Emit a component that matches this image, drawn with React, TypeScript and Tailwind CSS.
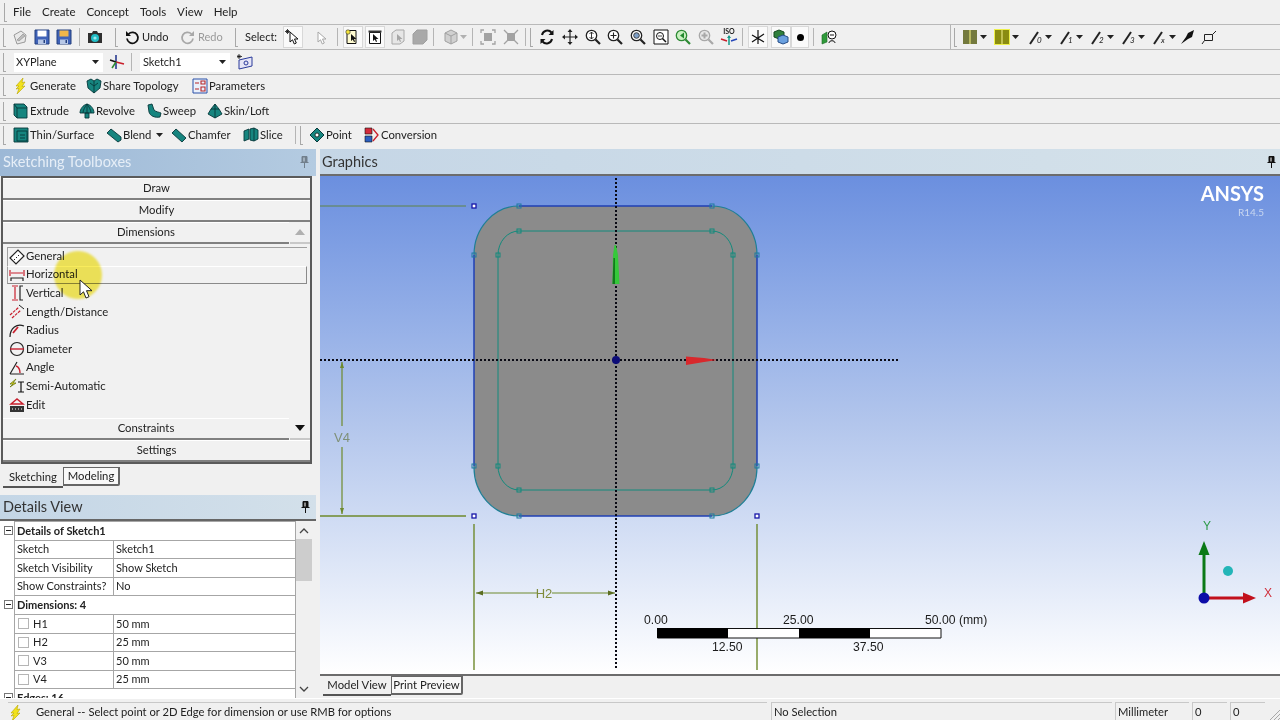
import type { ReactNode } from 'react';

type SlotProps = { className?: string; children?: ReactNode };

const Ico = ({ children, size = 16 }: { children: ReactNode; size?: number }) => (
  <svg width={size} height={size} viewBox="0 0 16 16" className="shrink-0">
    {children}
  </svg>
);

const Slot = ({ className = '', children }: SlotProps) => (
  <div className={`flex shrink-0 items-center justify-center ${className}`}>{children}</div>
);

const Grip = ({ className = '' }: { className?: string }) => (
  <div className={`h-[19px] w-[3px] shrink-0 border-l border-b border-[#a8a8a8] ${className}`} />
);
const Sep = ({ className = '' }: { className?: string }) => (
  <div className={`h-[18px] w-px shrink-0 bg-[#b5b5b5] ${className}`} />
);
const Caret = ({ className = '' }: { className?: string }) => (
  <svg width="7" height="4" viewBox="0 0 7 4" className={`shrink-0 ${className}`}>
    <path d="M0 0h7L3.500 4z" fill="#222" />
  </svg>
);

const Bolt = () => (
  <Ico>
    <path d="M10 0 3 8h3l-3 3 3-.5L4 16l8-8-3 .5L12 4 9 4.500z" fill="#f2e21b" stroke="#b8a400" strokeWidth=".6" />
  </Ico>
);
const Floppy = ({ label = '#fff' }: { label?: string }) => (
  <Ico>
    <path d="M1 1h14v14H1z" fill="#3f62b8" stroke="#24407f" />
    <path d="M3.500 1.500h9v6h-9z" fill={label} />
    <path d="M4 10.500h8V15H4z" fill="#b8c8e6" />
    <path d="M9.500 11h1.500v3H9.500z" fill="#24407f" />
  </Ico>
);
const Sheet = () => (
  <Ico>
    <path d="M2 6 9 2l5 4-1 7-8 2z" fill="#e9e9e9" stroke="#9a9a9a" />
    <path d="m5 11 6-6 2 2-6 5z" fill="#bcbcbc" stroke="#8a8a8a" strokeWidth=".6" />
  </Ico>
);
const Camera = () => (
  <Ico>
    <path d="M1 4h4l1-2h4l1 2h4v10H1z" fill="#303030" />
    <circle cx="8" cy="9" r="4" fill="#22bdc6" />
    <circle cx="8" cy="9" r="1.600" fill="#9fe8ec" />
  </Ico>
);
const Arrow = ({ color = '#111', fill = '#fff' }: { color?: string; fill?: string }) => (
  <path d="M5 3v10l2.500-2.200L9.300 15l2-1-1.800-4H13z" fill={fill} stroke={color} strokeWidth="1" strokeLinejoin="round" />
);
const UndoIcon = ({ color = '#111', flip = false }: { color?: string; flip?: boolean }) => (
  <Ico>
    <g transform={flip ? 'matrix(-1 0 0 1 16 0)' : undefined}>
      <path d="M4.500 5A5.500 5.500 0 1 1 3 9.500" fill="none" stroke={color} strokeWidth="1.800" />
      <path d="M2 2v5h5z" fill={color} />
    </g>
  </Ico>
);
const SelectPoint = () => (
  <Ico>
    <path d="M2 1.500h9v13H2z" fill="#fffbd0" stroke="#111" />
    <circle cx="3" cy="3" r="2.200" fill="#f5e53a" stroke="#333" strokeWidth=".6" />
    <path d="M6 5v7l1.800-1.500L9 13l1-.5-1-2.500h2.500z" fill="#111" />
  </Ico>
);
const SelectEdge = () => (
  <Ico>
    <path d="M2.500 3.500h11v11h-11z" fill="#fff" stroke="#111" />
    <path d="M1.500 1.500h13v2h-13z" fill="#333" />
    <path d="M6 5v7l1.800-1.500L9 13l1-.5-1-2.500h2.500z" fill="#111" />
  </Ico>
);
const SelectFace = () => (
  <Ico>
    <path d="M2 4 6 1h8v11l-4 3H2z" fill="#e6e6e6" stroke="#a8a8a8" />
    <path d="M7 5v7l1.800-1.500L10 13l1-.5-1-2.500h2.500z" fill="#a5a5a5" />
  </Ico>
);
const SelectBody = () => (
  <Ico>
    <path d="M1 5l4-4h10v10l-4 4H1z" fill="#a9a9a9" stroke="#a0a0a0" strokeLinejoin="round" />
  </Ico>
);
const CubeGray = () => (
  <Ico>
    <path d="m8 1 6 3v8l-6 3-6-3V4z" fill="#d0d0d0" stroke="#a0a0a0" />
    <path d="M2 4l6 3 6-3M8 7v8" fill="none" stroke="#a0a0a0" />
  </Ico>
);
const Fit = ({ star = false }: { star?: boolean }) => (
  <Ico>
    <path d="M4 4h8v8H4z" fill="#a2a2a2" />
    {star ? (
      <path d="M1 1l4 4M15 1l-4 4M1 15l4-4M15 15l-4-4" stroke="#a2a2a2" strokeWidth="1.300" />
    ) : (
      <path d="M1 4V1h3M12 1h3v3M15 12v3h-3M4 15H1v-3" fill="none" stroke="#a2a2a2" strokeWidth="1.300" />
    )}
  </Ico>
);
const Rotate = () => (
  <Ico>
    <path d="M3 6a5.500 5.500 0 0 1 9.500-2.500M13 10a5.500 5.500 0 0 1-9.500 2.500" fill="none" stroke="#111" strokeWidth="2" />
    <path d="M14.500 1v5h-5zM1.500 15v-5h5z" fill="#111" />
  </Ico>
);
const Pan = () => (
  <Ico>
    <path d="M8 1v14M1 8h14" stroke="#222" strokeWidth="1.200" />
    <path d="M8 0l2.500 3h-5zM8 16l2.500-3h-5zM0 8l3-2.500v5zM16 8l-3-2.500v5z" fill="#222" />
  </Ico>
);
const Mag = ({ children, ring = '#222', fill = '#fff' }: { children?: ReactNode; ring?: string; fill?: string }) => (
  <Ico>
    <circle cx="6.500" cy="6.500" r="5.200" fill={fill} stroke={ring} strokeWidth="1.300" />
    <path d="m10.500 10.500 4.500 4.500" stroke={ring} strokeWidth="2.200" />
    {children}
  </Ico>
);
const Iso = () => (
  <svg width="20" height="20" viewBox="0 0 20 20" className="shrink-0">
    <text x="10" y="7" textAnchor="middle" fontSize="7" fontWeight="700" fill="#222">ISO</text>
    <path d="M10 9v9" stroke="#139a8a" strokeWidth="1.500" />
    <path d="M8 11l2-3 2 3z" fill="#139a8a" />
    <path d="M2 12l6 2" stroke="#c81e2a" strokeWidth="1.500" />
    <path d="M18 12l-6 2" stroke="#2547b8" strokeWidth="1.500" />
  </svg>
);
const Axes = () => (
  <Ico>
    <path d="M8 1v14M2 13 14 5M2 6l12 7" stroke="#111" strokeWidth="1.200" />
  </Ico>
);
const Cube3d = () => (
  <Ico>
    <path d="m6 1 5 2v5l-5 2-5-2V3z" fill="#2f7f3c" stroke="#174a20" />
    <path d="m10 6 5 2v5l-5 2-5-2V8z" fill="#6aa0df" stroke="#254c86" />
  </Ico>
);
const Look = () => (
  <Ico>
    <path d="M1 6l5-3v10l-5 2z" fill="#2f9a3a" stroke="#1c6a26" strokeWidth=".6" />
    <circle cx="11" cy="6" r="4" fill="#fff" stroke="#111" />
    <path d="M8 14c0-3 6-3 6 0" fill="none" stroke="#111" />
    <path d="M9 6h4" stroke="#111" />
  </Ico>
);
const Bars = ({ bg, edge }: { bg: string; edge?: string }) => (
  <svg width="14" height="14" viewBox="0 0 14 14" className="shrink-0" style={edge ? { outline: `1px solid ${edge}` } : undefined}>
    <path d="M0 0h14v14H0z" fill={bg} />
    <path d="M7 0v14" stroke="#e6e47a" strokeWidth="1.200" />
  </svg>
);
const Selector = ({ n }: { n: string }) => (
  <Ico>
    <path d="M1 15 9 3" stroke="#222" strokeWidth="2" />
    <text x="8" y="14" fontSize="8" fontStyle="italic" fill="#222">{n}</text>
  </Ico>
);

const Teal = ({ d, inner }: { d: string; inner?: string }) => (
  <Ico>
    <path d={d} fill="#16857f" stroke="#07383a" strokeWidth=".9" strokeLinejoin="round" />
    {inner && <path d={inner} fill="none" stroke="#07383a" strokeWidth=".9" />}
  </Ico>
);

const Sel = ({ value, className = '' }: { value: string; className?: string }) => (
  <div className={`flex h-[19px] shrink-0 items-center justify-between bg-white pl-[2px] pr-[4px] text-[11px] ${className}`}>
    <span>{value}</span>
    <Caret />
  </div>
);

const Tool = ({ icon, label, className = '' }: { icon: ReactNode; label: string; className?: string }) => (
  <div className={`flex shrink-0 items-center gap-[1px] ${className}`}>
    {icon}
    <span className="whitespace-nowrap">{label}</span>
  </div>
);

function Toolbars() {
  return (
    <div className="shrink-0 text-[11.300px] text-[#222]">
      <div className="flex h-[25px] items-center border-b border-[#b9b9b9] pl-[4px]">
        <Grip />
        <div className="ml-[6px] flex gap-[11px] text-[11.500px]">
          <span>File</span>
          <span>Create</span>
          <span>Concept</span>
          <span>Tools</span>
          <span>View</span>
          <span>Help</span>
        </div>
      </div>

      <div className="flex h-[25px] items-center border-b border-[#b9b9b9] pl-[3px] text-[11px]">
        <Grip />
        <Slot className="ml-[3px] w-[22px]"><Sheet /></Slot>
        <Slot className="w-[22px]"><Floppy /></Slot>
        <Slot className="w-[22px]"><Floppy label="#f0b64a" /></Slot>
        <Sep className="ml-[4px]" />
        <Slot className="ml-[4px] w-[22px]"><Camera /></Slot>
        <Grip className="ml-[9px]" />
        <div className="ml-[6px]"><UndoIcon /></div>
        <span className="ml-[2px] w-[26px]">Undo</span>
        <div className="ml-[12px]"><UndoIcon color="#a8a8a8" flip /></div>
        <span className="ml-[2px] w-[26px] text-[#9a9a9a]">Redo</span>
        <Grip className="ml-[11px]" />
        <span className="ml-[7px] w-[32px] whitespace-nowrap">Select:</span>
        <Slot className="ml-[6px] h-[22px] w-[20px] border border-[#d8d8d8] bg-[#fafafa]"><Ico><Arrow /><path d="M1 1l3 3M4 1 1 4M2.500 0v5M0 2.500h5" stroke="#111" strokeWidth=".8" /></Ico></Slot>
        <Slot className="ml-[8px] w-[20px]"><Ico><Arrow color="#a8a8a8" /></Ico></Slot>
        <Sep className="ml-[6px]" />
        <Slot className="ml-[5px] h-[22px] w-[20px] border border-[#d8d8d8] bg-[#fafafa]"><SelectPoint /></Slot>
        <Slot className="ml-[2px] h-[22px] w-[20px] border border-[#d8d8d8] bg-[#fafafa]"><SelectEdge /></Slot>
        <Slot className="ml-[3px] w-[20px]"><SelectFace /></Slot>
        <Slot className="ml-[2px] w-[20px]"><SelectBody /></Slot>
        <Sep className="ml-[3px]" />
        <Slot className="ml-[8px] w-[26px] gap-[1px]"><CubeGray /><Caret className="opacity-30" /></Slot>
        <Sep className="ml-[4px]" />
        <Slot className="ml-[5px] w-[20px]"><Fit /></Slot>
        <Slot className="ml-[3px] w-[20px]"><Fit star /></Slot>
        <Sep className="ml-[4px]" />
        <Grip className="ml-[4px]" />
        <Slot className="ml-[3px] w-[22.700px]"><Rotate /></Slot>
        <Slot className="w-[22.700px]"><Pan /></Slot>
        <Slot className="w-[22.700px]">
          <Mag><path d="M6.500 3v7M4.500 5l2-2 2 2M4.500 8l2 2 2-2" fill="none" stroke="#222" strokeWidth=".9" /></Mag>
        </Slot>
        <Slot className="w-[22.700px]">
          <Mag><path d="M6.500 3.500v6M3.500 6.500h6" stroke="#222" strokeWidth="1.100" /></Mag>
        </Slot>
        <Slot className="w-[22.700px]">
          <Mag><circle cx="6.500" cy="6.500" r="2.800" fill="#7fa0c8" stroke="#333" strokeWidth=".9" /></Mag>
        </Slot>
        <Slot className="w-[22.700px]">
          <Ico>
            <path d="M1 1h14v14H1z" fill="#fff" stroke="#111" />
            <circle cx="7" cy="7" r="3.500" fill="none" stroke="#111" />
            <path d="m9.500 9.500 3.500 3.500" stroke="#111" strokeWidth="1.500" />
            <path d="M5 7h4" stroke="#111" strokeWidth=".8" />
          </Ico>
        </Slot>
        <Slot className="w-[22.700px]">
          <Mag ring="#2d8a34" fill="#c8f0c0"><path d="M9 3.500 5 6.500l4 3z" fill="#238a2e" /></Mag>
        </Slot>
        <Slot className="w-[22.700px]">
          <Mag ring="#a8a8a8" fill="#e8e8e8"><path d="M6.500 3.500v6M3.500 6.500h6" stroke="#a8a8a8" strokeWidth="2" /></Mag>
        </Slot>
        <Slot className="w-[22.700px]"><Iso /></Slot>
        <Sep className="ml-[2px]" />
        <Slot className="ml-[5px] h-[22px] w-[20px] border border-[#d8d8d8] bg-[#fafafa]"><Axes /></Slot>
        <Slot className="ml-[3px] h-[22px] w-[20px] border border-[#d8d8d8] bg-[#fafafa]"><Cube3d /></Slot>
        <Slot className="h-[22px] w-[18px] border border-[#d8d8d8] bg-[#fafafa]">
          <div className="h-[7px] w-[7px] rounded-full bg-black" />
        </Slot>
        <Sep className="ml-[4px]" />
        <Slot className="ml-[4px] w-[22px]"><Look /></Slot>
        <Sep className="ml-[110px] h-[24px]" />
        <Grip className="ml-[3px]" />
        <Slot className="ml-[6px] w-[26px] justify-start gap-[3px]"><Bars bg="#747a3e" /><Caret /></Slot>
        <Slot className="ml-[6px] w-[26px] justify-start gap-[3px]"><Bars bg="#8a8c10" edge="#eef04a" /><Caret /></Slot>
        {['0', '1', '2', '3', 'x'].map((n) => (
          <Slot key={n} className="ml-[7px] w-[24px] gap-0"><Selector n={n} /><Caret /></Slot>
        ))}
        <Slot className="ml-[3px] w-[18px]">
          <Ico><path d="M1 15 6 8l2-4 6-3-2 7-4 2z" fill="#111" /></Ico>
        </Slot>
        <Slot className="ml-[3px] w-[18px]">
          <Ico><path d="M3.500 5.500h8v6h-8zM3.500 11.500 1 15M11.500 5.500 15 2" fill="none" stroke="#222" /></Ico>
        </Slot>
      </div>

      <div className="flex h-[25px] items-center border-b border-[#b9b9b9] pl-[3px]">
        <Grip />
        <Sel value="XYPlane" className="ml-[8px] w-[89px]" />
        <Slot className="ml-[4px] w-[20px]">
          <Ico>
            <path d="M7 1v14" stroke="#1d2f8a" strokeWidth="1.500" />
            <path d="M1 6l6 2" stroke="#111" strokeWidth="1.500" />
            <path d="M7 8l8 2" stroke="#c81e2a" strokeWidth="1.800" />
            <path d="M7 8l-4 6" stroke="#2a8a30" strokeWidth="1.500" />
          </Ico>
        </Slot>
        <Sep className="ml-[4px]" />
        <Sel value="Sketch1" className="ml-[8px] w-[90px] pl-[3px]" />
        <Slot className="ml-[6px] w-[18px]">
          <Ico>
            <path d="M2 6l13-3v9L2 15z" fill="#e5e5f6" stroke="#2a3a9a" />
            <circle cx="9" cy="9" r="2" fill="none" stroke="#2a3a9a" />
            <path d="M2 0v5M0 2.500h5M.500 1l3 3M3.500 1l-3 3" stroke="#111" strokeWidth=".8" />
          </Ico>
        </Slot>
      </div>

      <div className="flex h-[24px] items-center border-b border-[#b9b9b9] pb-[1px] pl-[3px]">
        <Grip />
        <Tool icon={<Bolt />} label="Generate" className="ml-[7px] w-[61px]" />
        <Tool
          icon={<Teal d="M1 3l4-2 3 2 3-2 4 2-1 7-6 5-6-5z" inner="M8 3v12M4 5l4 3 4-3" />}
          label="Share Topology"
          className="ml-[12px] w-[95px]"
        />
        <Tool
          icon={
            <Ico>
              <path d="M1 1h14v14H1z" fill="#eaf0fb" stroke="#2a50a8" />
              <path d="M3 5h4M9 3h4v3H9zM3 11h4M9 9h4v4H9z" fill="none" stroke="#b5262a" strokeWidth="1.100" />
            </Ico>
          }
          label="Parameters"
          className="ml-[11px] w-[73px]"
        />
      </div>

      <div className="flex h-[25px] items-center border-b border-[#b9b9b9] pl-[3px]">
        <Grip />
        <Tool icon={<Teal d="M1 1h10l3 3v11H4l-3-3z" inner="M4 15V5h10M1 1l3 4" />} label="Extrude" className="ml-[7px] w-[54px]" />
        <Tool icon={<Teal d="M8 1c4 1 7 5 7 9H1c0-4 3-8 7-9zM6 10h4v5H6z" inner="M8 1v9M4 10c0-3 2-6 4-9M12 10c0-3-2-6-4-9" />} label="Revolve" className="ml-[12px] w-[55px]" />
        <Tool icon={<Teal d="M2 2l4-1 2 6c2 2 5 2 7 3l-1 4c-5 1-10-1-11-5z" />} label="Sweep" className="ml-[12px] w-[49px]" />
        <Tool icon={<Teal d="M8 1l4 5 3 5-7 4-7-4 3-5z" inner="M8 1v14M4 6h8" />} label="Skin/Loft" className="ml-[12px] w-[62px]" />
      </div>

      <div className="flex h-[25px] items-center pb-[3px] pl-[3px]">
        <Grip />
        <Tool icon={<Teal d="M1 1h14v14H1z" inner="M4 4h10v10H4zM7 8h5M7 11h5" />} label="Thin/Surface" className="ml-[7px] w-[81px]" />
        <Tool icon={<Teal d="M1 6l4-4 10 8v3l-3 2z" />} label="Blend" className="ml-[12px] w-[45px]" />
        <Caret className="ml-[5px]" />
        <Tool icon={<Teal d="M1 6l4-4 10 9-4 4z" />} label="Chamfer" className="ml-[8px] w-[61px]" />
        <Tool icon={<Teal d="M1 4l5-2v10l-5 2zM7 2l4-1 4 2v9l-4 2-4-1z" inner="M11 1v13" />} label="Slice" className="ml-[11px] w-[41px]" />
        <Sep className="ml-[11px]" />
        <Grip className="ml-[4px]" />
        <Tool
          icon={
            <Ico>
              <path d="M8 1l7 7-7 7-7-7z" fill="#16857f" stroke="#07383a" />
              <circle cx="8" cy="8" r="2" fill="#fff" stroke="#111" strokeWidth=".8" />
            </Ico>
          }
          label="Point"
          className="ml-[6px] w-[44px]"
        />
        <Tool
          icon={
            <Ico>
              <path d="M1 1h7v6H1z" fill="#d32a3a" stroke="#111" strokeWidth=".6" />
              <path d="M1 9h7v6H1z" fill="#2a5fc0" stroke="#111" strokeWidth=".6" />
              <path d="M9 2l5 6-5 6" fill="none" stroke="#c81e2a" strokeWidth="1.300" />
            </Ico>
          }
          label="Conversion"
          className="ml-[11px] w-[74px]"
        />
      </div>
    </div>
  );
}

const PinIcon = () => (
  <svg width="9" height="12" viewBox="0 0 9 12" className="shrink-0">
    <path d="M2 .5h5v6H2zM.5 6.500h8M4.500 7v5" fill="#111" stroke="#111" />
    <path d="M3.500 1.500h1v4h-1z" fill="#fff" />
  </svg>
);

const ToolboxBtn = ({ label, caret }: { label: string; caret?: 'up' | 'down' }) => (
  <div className="flex h-[22px] shrink-0 gap-[1px]">
    <div className="flex flex-1 items-center justify-center border-b-2 border-[#808080] border-t border-t-white bg-[#f1f1f1]">
      {label}
    </div>
    {caret && (
      <div className="flex w-[20px] items-center justify-center border-b-2 border-[#c8c8c8] bg-[#f1f1f1]">
        <svg width="10" height="6" viewBox="0 0 10 6">
          <path d={caret === 'up' ? 'M0 6h10L5 0z' : 'M0 0h10L5 6z'} fill={caret === 'up' ? '#b0b0b0' : '#111'} />
        </svg>
      </div>
    )}
  </div>
);

const Red = '#c8202e';
const dimItems: { label: string; icon: ReactNode }[] = [
  {
    label: 'General',
    icon: (
      <Ico>
        <path d="m1 9 8-8 6 6-8 8z" fill="#fff" stroke="#222" strokeWidth="1.200" />
        <path d="m5 10 1 1m1-3 1 1m1-3 1 1" stroke="#222" />
      </Ico>
    ),
  },
  {
    label: 'Horizontal',
    icon: (
      <Ico>
        <path d="M1 3v6M15 3v6M2 6h12" stroke={Red} strokeWidth="1.200" />
        <path d="M2 14v-3h12v3" fill="none" stroke="#222" strokeWidth="1.200" />
      </Ico>
    ),
  },
  {
    label: 'Vertical',
    icon: (
      <Ico>
        <path d="M3 1h6M3 15h6M6 2v12" stroke={Red} strokeWidth="1.200" />
        <path d="M14 1h-3v14h3" fill="none" stroke="#222" strokeWidth="1.200" />
      </Ico>
    ),
  },
  {
    label: 'Length/Distance',
    icon: (
      <Ico>
        <path d="M1 11 10 3M3 14l9-8" stroke={Red} strokeWidth="1.200" strokeDasharray="3 1" />
        <path d="M10 1l5 4" stroke="#222" />
      </Ico>
    ),
  },
  {
    label: 'Radius',
    icon: (
      <Ico>
        <path d="M15 3C8 0 1 5 1 14" fill="none" stroke="#222" strokeWidth="1.200" />
        <path d="M9 4 4 10" stroke={Red} strokeWidth="1.800" />
      </Ico>
    ),
  },
  {
    label: 'Diameter',
    icon: (
      <Ico>
        <circle cx="8" cy="8" r="6.500" fill="none" stroke="#222" strokeWidth="1.200" />
        <path d="M1 8h14" stroke={Red} strokeWidth="1.400" />
      </Ico>
    ),
  },
  {
    label: 'Angle',
    icon: (
      <Ico>
        <path d="M1 14h14M1 14 8 2" fill="none" stroke="#222" strokeWidth="1.200" />
        <path d="M7 6c3 1 4 4 4 7" fill="none" stroke={Red} strokeWidth="1.400" />
      </Ico>
    ),
  },
  {
    label: 'Semi-Automatic',
    icon: (
      <Ico>
        <path d="M7 1 1 6h3l-3 3 6-4H4z" fill="#e8d820" stroke="#6a7a10" strokeWidth=".8" />
        <path d="M9 14h6M12 4v10M9 4h6" stroke="#111" strokeWidth="1.200" />
      </Ico>
    ),
  },
  {
    label: 'Edit',
    icon: (
      <Ico>
        <path d="M2 7 8 2l6 5z" fill="#f5f5f5" stroke={Red} strokeWidth="1.500" />
        <path d="M1 9h14v6H1z" fill="#333" />
        <path d="M3 12h1M6 12h1M9 12h1M12 12h1" stroke="#fff" />
      </Ico>
    ),
  },
];

function Toolbox() {
  return (
    <div className="ml-[1px] flex h-[288px] w-[311px] shrink-0 flex-col border-2 border-[#5a5a5a] bg-[#f1f1f1] text-[11.300px] text-[#222]">
      <ToolboxBtn label="Draw" />
      <ToolboxBtn label="Modify" />
      <ToolboxBtn label="Dimensions" caret="up" />
      <div className="flex flex-1 flex-col pl-[4px] pr-[3px] pt-[3px]">
        {dimItems.map((item, i) => (
          <div
            key={item.label}
            className={`flex h-[18.600px] items-center gap-[1px] pl-[1px] ${
              i === 0
                ? 'border-l border-t border-[#a0a0a0]'
                : i === 1
                  ? 'border-b border-r border-[#8a8a8a] border-l border-l-[#a0a0a0] border-t border-t-white'
                  : 'border-l border-transparent'
            }`}
          >
            {item.icon}
            <span>{item.label}</span>
          </div>
        ))}
      </div>
      <ToolboxBtn label="Constraints" caret="down" />
      <ToolboxBtn label="Settings" />
    </div>
  );
}

const PanelTabs = ({ active, other, activeCls, otherCls }: { active: string; other: string; activeCls: string; otherCls: string }) => (
  <div className="flex items-start pl-[3px] text-[11.300px] text-[#222]">
    <div className={`flex items-end justify-center whitespace-nowrap border-b-2 border-[#555] ${activeCls}`}>{active}</div>
    <div className={`flex items-center justify-center whitespace-nowrap rounded-br-[2px] border border-b-2 border-r-2 border-[#666] bg-[#f8f8f8] ${otherCls}`}>
      {other}
    </div>
  </div>
);

const Minus = () => (
  <div className="relative h-[9px] w-[9px] border border-[#777] bg-white">
    <div className="absolute left-[1px] top-[3px] h-px w-[5px] bg-[#222]" />
  </div>
);

const Row = ({ name, value, check }: { name: string; value: string; check?: boolean }) => (
  <div className="flex h-[18.600px] items-center border-b border-[#a6a6a6] pl-[2px]">
    <div className="flex w-[96px] shrink-0 items-center whitespace-nowrap">
      {check && <div className="mr-[4px] ml-[1px] h-[11px] w-[11px] border border-[#b5b5b5] bg-white" />}
      <span>{name}</span>
    </div>
    <div className="flex h-full flex-1 items-center border-l border-[#a6a6a6] pl-[2px]">{value}</div>
  </div>
);

const Section = ({ label }: { label: string }) => (
  <div className="relative flex h-[18.600px] items-center border-b border-[#a6a6a6] pl-[2px] font-bold">
    <div className="absolute left-[-11px] top-[4px]"><Minus /></div>
    {label}
  </div>
);

function Details() {
  return (
    <div className="flex min-h-0 w-[312px] flex-1 text-[11px] text-[#222]">
      <div className="w-[296px] shrink-0 overflow-hidden bg-white pl-[14px]">
        <div className="border-x border-t border-[#a6a6a6]">
          <Section label="Details of Sketch1" />
          <Row name="Sketch" value="Sketch1" />
          <Row name="Sketch Visibility" value="Show Sketch" />
          <Row name="Show Constraints?" value="No" />
          <Section label="Dimensions: 4" />
          <Row check name="H1" value="50 mm" />
          <Row check name="H2" value="25 mm" />
          <Row check name="V3" value="50 mm" />
          <Row check name="V4" value="25 mm" />
          <Section label="Edges: 16" />
        </div>
      </div>
      <div className="relative w-[16px] shrink-0 bg-[#f0f0f0]">
        <svg width="10" height="6" viewBox="0 0 10 6" className="absolute left-[3px] top-[7px]">
          <path d="M1 5l4-4 4 4" fill="none" stroke="#444" strokeWidth="1.300" />
        </svg>
        <div className="absolute left-0 top-[18px] h-[42px] w-full bg-[#cdcdcd]" />
        <svg width="10" height="6" viewBox="0 0 10 6" className="absolute bottom-[6px] left-[3px]">
          <path d="M1 1l4 4 4-4" fill="none" stroke="#444" strokeWidth="1.300" />
        </svg>
      </div>
    </div>
  );
}

function Sidebar() {
  return (
    <div className="flex w-[316px] shrink-0 flex-col">
      <div className="flex h-[27px] shrink-0 items-center justify-between bg-gradient-to-r from-[#9cb8d6] to-[#b4cbe1] pb-[1px] pl-[3px] pr-[7px] text-[14.500px] text-[#e6eef7]">
        <span>Sketching Toolboxes</span>
        <div className="opacity-40"><PinIcon /></div>
      </div>
      <Toolbox />
      <div className="h-[26px] shrink-0">
        <PanelTabs active="Sketching" other="Modeling" activeCls="h-[24px] w-[60px]" otherCls="mt-[3px] h-[19px] w-[57px] pt-[1px]" />
      </div>
      <div className="mt-[5px] flex h-[26px] shrink-0 items-center justify-between border-b-2 border-[#666] bg-gradient-to-r from-[#c4d6e6] to-[#d3e0ea] pl-[3px] pr-[6px] text-[14.500px] text-[#333]">
        <span>Details View</span>
        <PinIcon />
      </div>
      <Details />
    </div>
  );
}

function Drawing() {
  const olive = '#6f8a2e';
  const outerV = [
    [474, 255], [474, 466], [757, 255], [757, 466],
    [519, 206], [712, 206], [519, 516], [712, 516],
  ];
  const innerV = [
    [498, 255], [498, 466], [733, 255], [733, 466],
    [519, 231], [712, 231], [519, 490], [712, 490],
  ];
  const handles = [[474, 206], [474, 516], [757, 516]];
  return (
    <svg className="absolute inset-0 h-full w-full" viewBox="320 176 960 498">
      <path d="M519 206H712A45 49 0 0 1 757 255V466A45 49 0 0 1 712 516H519A45 49 0 0 1 474 466V255A45 49 0 0 1 519 206Z" fill="#8b8b8b" />
      <path d="M519 206H712M757 255V466M712 516H519M474 466V255" fill="none" stroke="#2140b4" strokeWidth="1.500" />
      <path d="M712 206A45 49 0 0 1 757 255M757 466A45 49 0 0 1 712 516M519 516A45 49 0 0 1 474 466M474 255A45 49 0 0 1 519 206" fill="none" stroke="#1f7f95" strokeWidth="1.200" />
      <path d="M519 231H712A21 24 0 0 1 733 255V466A21 24 0 0 1 712 490H519A21 24 0 0 1 498 466V255A21 24 0 0 1 519 231Z" fill="none" stroke="#128a7c" strokeWidth="1" />

      {outerV.map(([x, y]) => (
        <rect key={`o${x}-${y}`} x={x - 2} y={y - 2} width="4" height="4" fill="none" stroke="#1f7ba0" strokeWidth="1" />
      ))}
      {innerV.map(([x, y]) => (
        <rect key={`i${x}-${y}`} x={x - 2} y={y - 2} width="4" height="4" fill="none" stroke="#128a7c" strokeWidth="1" />
      ))}

      <path d="M320 360H898" stroke="#0a0a14" strokeWidth="2" strokeDasharray="2 2" />
      <path d="M616 178V668" stroke="#0a0a14" strokeWidth="2" strokeDasharray="2 2" />
      <circle cx="616" cy="360" r="4" fill="#0c0c78" />

      <path d="M614.500 245 616 245 618 255 619.500 284 612.500 284 613 255Z" fill="#35c83a" />
      <path d="M612.500 284 615 284 615 258 613.500 258Z" fill="#127a1c" />
      <path d="M686 356.500 704 358 717 360 704 362 686 365Z" fill="#d8282c" />

      <path d="M320 516H466M474 524V670M757 524V670" stroke={olive} strokeWidth="1.400" />
      <path d="M320 206H466" stroke="#668a78" strokeWidth="1.400" />
      <path d="M342 362V426M342 447V514" stroke={olive} strokeWidth="1.200" />
      <path d="M340 368 342 362 344 368ZM340 508 342 514 344 508Z" fill={olive} />
      <text x="342" y="442" textAnchor="middle" fontSize="13" fontFamily="Liberation Sans, sans-serif" fill="#7f9078">V4</text>
      <path d="M476 593H537M552 593H615" stroke={olive} strokeWidth="1.100" />
      <path d="M476 593 483 590.500V595.500ZM615 593 608 590.500V595.500Z" fill="#5b6d20" />
      <text x="544" y="598" textAnchor="middle" fontSize="13" fontFamily="Liberation Sans, sans-serif" fill="#7f8c3c">H2</text>

      {handles.map(([x, y]) => (
        <rect key={`h${x}-${y}`} x={x - 2} y={y - 2} width="4" height="4" fill="#fff" stroke="#1616a8" strokeWidth="1.300" />
      ))}

      <path d="M657.500 628.500H941V638H657.500Z" fill="#fff" stroke="#111" />
      <path d="M657 628H728V638H657ZM799 628H870V638H799Z" fill="#000" />
      <g fontSize="12.200" fontFamily="Liberation Sans, sans-serif" fill="#1c1c1c">
        <text x="644" y="624">0.00</text>
        <text x="783" y="624">25.00</text>
        <text x="925" y="624">50.00 (mm)</text>
        <text x="712" y="651">12.50</text>
        <text x="853" y="651">37.50</text>
      </g>

      <path d="M1204 598V552" stroke="#0b7a17" strokeWidth="3" />
      <path d="M1204 541 1209.500 555H1198.500Z" fill="#0b7a17" />
      <path d="M1204 598H1244" stroke="#c2101c" strokeWidth="3" />
      <path d="M1256 598 1243 592.500V603.500Z" fill="#c2101c" />
      <circle cx="1204" cy="598" r="5.500" fill="#0c0ca8" />
      <circle cx="1228" cy="571" r="5" fill="#23b5b8" />
      <g fontSize="12" fontFamily="Liberation Sans, sans-serif">
        <text x="1207" y="530" textAnchor="middle" fill="#2c9a48">Y</text>
        <text x="1268" y="597" textAnchor="middle" fill="#d0303c">X</text>
      </g>
    </svg>
  );
}

function GraphicsPanel() {
  return (
    <div className="ml-[4px] flex min-w-0 flex-1 flex-col">
      <div className="flex h-[27px] shrink-0 items-center justify-between border-b-2 border-[#6c6c6c] bg-gradient-to-r from-[#c5d6e6] to-[#d5e2ea] pl-[2px] pr-[4px] text-[14.500px] text-[#333]">
        <span>Graphics</span>
        <PinIcon />
      </div>
      <div className="relative h-[500px] shrink-0 overflow-hidden border-b-2 border-[#6c6c6c] bg-gradient-to-b from-[#6b8fdf] via-[#b3c6ec] to-white">
        <Drawing />
        <div className="absolute right-[16px] top-[5px] flex flex-col items-end text-white">
          <span className="text-[20px] font-bold leading-[25px]">ANSYS</span>
          <span className="text-[10px] leading-[12px] text-[#c9d7f0]">R14.5</span>
        </div>
      </div>
      <div className="flex-1">
        <PanelTabs active="Model View" other="Print Preview" activeCls="h-[20px] w-[68px]" otherCls="h-[19px] w-[72px] pt-[1px]" />
      </div>
    </div>
  );
}

function StatusBar() {
  return (
    <div className="relative flex h-[22px] shrink-0 items-end border-t border-white pl-[8px] text-[11.200px] text-[#222]">
      <div className="flex h-[18px] w-[759px] shrink-0 items-center gap-[12px] border-t border-[#c8c8c8] pt-[2px]">
        <Bolt />
        <span>General -- Select point or 2D Edge for dimension or use RMB for options</span>
      </div>
      <div className="ml-[4px] flex h-[18px] w-[341px] shrink-0 items-center border-l border-t border-[#c8c8c8] pl-[2px] pt-[2px]">No Selection</div>
      <div className="ml-[3px] flex h-[18px] w-[74px] shrink-0 items-center border-l border-t border-[#c8c8c8] pl-[2px] pt-[2px]">Millimeter</div>
      <div className="ml-[3px] flex h-[18px] w-[35px] shrink-0 items-center border-l border-t border-[#c8c8c8] pl-[2px] pt-[2px]">0</div>
      <div className="ml-[3px] flex h-[18px] w-[35px] shrink-0 items-center border-l border-t border-[#c8c8c8] pl-[2px] pt-[2px]">0</div>
      <svg width="10" height="10" viewBox="0 0 10 10" className="absolute bottom-0 right-0">
        <path d="M0 10 10 0M4 10l6-6M8 10l2-2" stroke="#a8a8a8" />
      </svg>
    </div>
  );
}

export default function App() {
  return (
    <div className="relative flex h-[720px] w-[1280px] flex-col overflow-hidden bg-[#f0f0f0] font-['Lato','Noto_Sans',sans-serif]">
      <Toolbars />
      <div className="flex min-h-0 flex-1">
        <Sidebar />
        <GraphicsPanel />
      </div>
      <StatusBar />

      {/* mouse highlight from the screen recorder */}
      <div className="absolute left-[54px] top-[251px] h-[48px] w-[48px] rounded-full bg-[#f8ec5c] mix-blend-multiply blur-[1px]" />
      <svg width="14" height="20" viewBox="0 0 14 20" className="absolute left-[79px] top-[279px]">
        <path d="M1 1v15l3.500-3.200L7 19l3-1.300-2.500-6H13z" fill="#fff" stroke="#222" strokeWidth="1" strokeLinejoin="round" />
      </svg>
    </div>
  );
}
